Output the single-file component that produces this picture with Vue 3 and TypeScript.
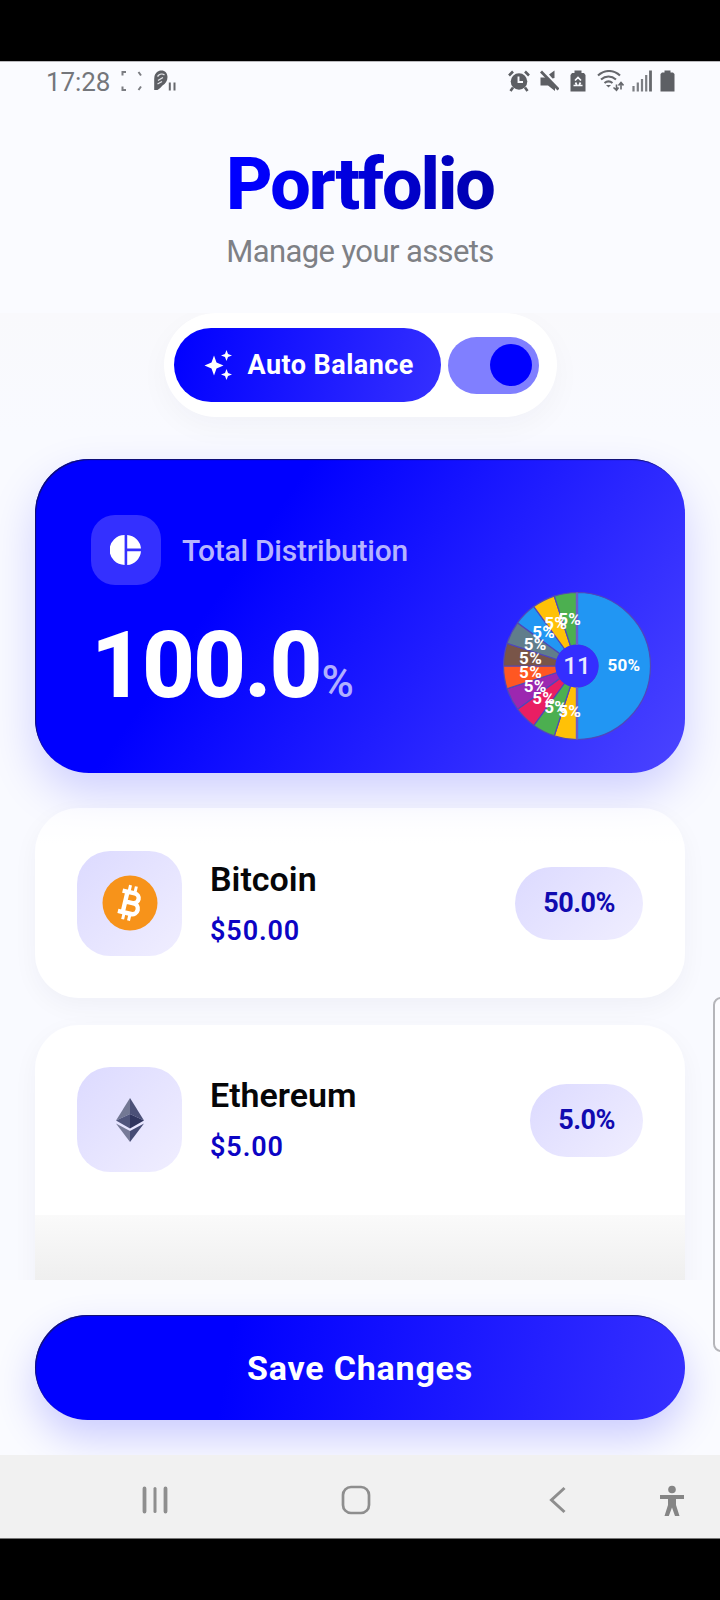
<script setup lang="ts">
interface Asset {
  id: 'btc' | 'eth'
  name: string
  value: string
  share: string
}

interface Slice {
  d: string
  color: string
  label: string
  x: number
  y: number
}

const assets: Asset[] = [
  { id: 'btc', name: 'Bitcoin', value: '$50.00', share: '50.0%' },
  { id: 'eth', name: 'Ethereum', value: '$5.00', share: '5.0%' },
]

const shares: [number, string][] = [
  [50, '#2196f3'],
  [5, '#ffc107'],
  [5, '#4caf50'],
  [5, '#e91e63'],
  [5, '#9c27b0'],
  [5, '#ff5722'],
  [5, '#795548'],
  [5, '#607d8b'],
  [5, '#2196f3'],
  [5, '#ffc107'],
  [5, '#4caf50'],
]

const OUTER = 73.5
const INNER = 21

function point(radius: number, percent: number): [number, number] {
  const angle = (percent / 100) * Math.PI * 2
  return [75 + radius * Math.sin(angle), 75 - radius * Math.cos(angle)]
}

let start = 0
const slices: Slice[] = shares.map(([size, color]) => {
  const end = start + size
  const [ax, ay] = point(OUTER, start)
  const [bx, by] = point(OUTER, end)
  const [cx, cy] = point(INNER, end)
  const [dx, dy] = point(INNER, start)
  const [x, y] = point(47, start + size / 2)
  start = end
  return {
    d: `M${ax} ${ay}A${OUTER} ${OUTER} 0 0 1 ${bx} ${by}L${cx} ${cy}A${INNER} ${INNER} 0 0 0 ${dx} ${dy}Z`,
    color,
    label: `${size}%`,
    x,
    y,
  }
})
</script>

<template>
  <div class="device">
    <div class="status">
      <div class="status-left">
        <span class="clock">17:28</span>
        <svg class="i-frame" width="22" height="20" viewBox="0 0 22 20" fill="none" stroke="#7b7d82" stroke-width="2">
          <path d="M1.500 4.500V1H5M17.500 1l2.500 3.500M20 15.500 17.500 19M5 19H1.500v-3.500" />
        </svg>
        <svg class="i-app" width="24" height="22" viewBox="0 0 24 22">
          <path fill="#5d5f64" d="M1.500 6C3 2 5.500.5 8.500.5c3.500 0 6 2.700 6 6.500 0 4-2 6.500-5 8.500-1.500 1.500-3 3.500-5 4.500H1.200V9z" />
          <path d="M4.500 6.500c2-2.500 5-3 7-1.500M5 10.500l5-3M4.500 14l4.500-2.500" stroke="#e4e5e9" stroke-width="1.300" fill="none" />
          <path d="M16.800 12.500V20.500M21.500 12.500V20.500" stroke="#66686d" stroke-width="2" />
        </svg>
      </div>
      <div class="status-right">
        <svg width="22" height="22" viewBox="0 0 22 22">
          <circle cx="11" cy="11.500" r="8.300" fill="#5d5f64" />
          <path d="M1 5.500 5 1.500M21 5.500l-4-4M5 17.500 2.500 21M17 17.500l2.500 3.500" stroke="#5d5f64" stroke-width="2.600" />
          <path d="M10.500 6.500v5.500h4.500" stroke="#fafbff" stroke-width="1.900" fill="none" />
        </svg>
        <svg class="i-mute" width="19" height="22" viewBox="0 0 19 22">
          <path fill="#5d5f64" d="M.5 7.500h6L15 15.500v5.500l-7-5.500H.5zM9 4.500 14.500.5v7.500l-2 .5z" />
          <path d="m1 1.500 17.500 18" stroke="#5d5f64" stroke-width="2.800" />
        </svg>
        <svg class="i-saver" width="16" height="22" viewBox="0 0 16 22">
          <path fill="#5d5f64" d="M4.500.5h7V3H14l1.500 2v16.500H.5V5L2 3h2.500z" />
          <path d="M5 10.500 8 7.500l3 3M3.500 15.500h3.500l-1.500-3M12.500 15.500H9l1.500-3" stroke="#fafbff" stroke-width="1.700" fill="none" />
        </svg>
        <svg class="i-wifi" width="27" height="22" viewBox="0 0 27 22" fill="none" stroke="#66686d" stroke-width="2.100">
          <path d="M1 5.500C7.500-.5 16.500-.5 23 5.500M4 9.500c4.500-4 10.500-4 15 0M7.500 13c2.600-2.200 5.400-2.200 8 0" />
          <path fill="#66686d" stroke="none" d="M11.500 17.500 9 15h5z" />
          <path d="M19.500 14.500V20M16.500 17.500l3 2.700 2-2.700M24 19.500V13M21.500 15.500l2.500-3 2.500 3" stroke-width="1.600" />
        </svg>
        <svg class="i-signal" width="20" height="22" viewBox="0 0 20 22" stroke="#66686d">
          <path d="M1.500 16v5.500M5.800 12.500v9M10 9v12.500M14.200 5v16.500" stroke="#7c7e83" stroke-width="2.200" />
          <path d="M18.500.5v21" stroke-width="2.800" />
        </svg>
        <svg class="i-battery" width="15" height="22" viewBox="0 0 15 22">
          <path fill="#5d5f64" d="M4.500.5h6V2.500H13l1.500 1.500v17.500H.5V4L2 2.500h2.500z" />
        </svg>
      </div>
    </div>

    <header class="header">
      <h1 class="title">Portfolio</h1>
      <p class="subtitle">Manage your assets</p>
    </header>

    <main class="content">
      <div class="balance">
        <button class="auto">
          <svg width="30" height="32" viewBox="0 0 30 32" fill="#fff">
            <path d="M10 6.500 12.500 13.500l7 3-7 3-2.500 7-2.500-7-7-3 7-3zM22.500 1l1.500 4 4 1.500L24 8l-1.500 4L21 8l-4-1.500L21 5zM22.500 20l1.500 4 4 1.500-4 1.500-1.500 4L21 27l-4-1.500 4-1.500z" />
          </svg>
          <span>Auto Balance</span>
        </button>
        <div class="toggle"><i class="knob"></i></div>
      </div>

      <section class="total">
        <div class="total-head">
          <div class="total-icon">
            <svg width="32" height="32" viewBox="0 0 32 32" fill="#fff">
              <path d="M14.600 1v30A15 15 0 0 1 14.600 1zM17.200 1A15 15 0 0 1 31 14.600H17.200zM17.200 17.300H31A15 15 0 0 1 17.200 31z" />
            </svg>
          </div>
          <span class="total-label">Total Distribution</span>
        </div>
        <div class="total-body">
          <div class="amount"><span class="number">100.0</span><span class="unit">%</span></div>
          <svg class="pie" width="150" height="150" viewBox="0 0 150 150">
            <path v-for="(s, i) in slices" :key="i" :d="s.d" :fill="s.color" stroke="#5048b8" stroke-width="1.200" />
            <circle cx="75" cy="75" r="21.500" fill="#342eff" />
            <path d="M75 1.500V54M75 96v52.500" stroke="#6a5cc8" stroke-width="2.400" />
            <text v-for="(s, i) in slices" :key="'t' + i" class="slice-label" :x="s.x" :y="s.y + 5" text-anchor="middle">{{ s.label }}</text>
            <text class="count" x="75" y="83" text-anchor="middle">11</text>
          </svg>
        </div>
      </section>

      <section v-for="a in assets" :key="a.id" class="asset" :class="a.id">
        <div class="coin">
          <svg v-if="a.id === 'btc'" width="56" height="56" viewBox="0 0 56 56">
            <circle cx="28" cy="28" r="27.500" fill="#f7931a" />
            <g transform="rotate(13 28 28)" fill="none" stroke="#fff">
              <path d="M23 17.500v21M18 17.500h12.500a5 5 0 0 1 0 10H23M18 38.500h13.500a5.500 5.500 0 0 0 0-11" stroke-width="4.400" />
              <path d="M24.500 10.500v7M30.500 10.500v7M24.500 38.500v7M30.500 38.500v7" stroke-width="3" />
            </g>
          </svg>
          <svg v-else width="28" height="44" viewBox="0 0 28 44">
            <path fill="#737894" d="M14 0 0 22.500 14 16z" />
            <path fill="#4b5078" d="m14 0 14 22.500L14 16z" />
            <path fill="#50557c" d="M0 22.500 14 16v14.500z" />
            <path fill="#30355f" d="M28 22.500 14 16v14.500z" />
            <path fill="#777b98" d="M0 25.500 14 33v11z" />
            <path fill="#454b75" d="M28 25.500 14 33v11z" />
          </svg>
        </div>
        <div class="info">
          <div class="name">{{ a.name }}</div>
          <div class="value">{{ a.value }}</div>
        </div>
        <div class="chip">{{ a.share }}</div>
      </section>
    </main>

    <footer class="footer">
      <button class="save">Save Changes</button>
    </footer>

    <nav class="nav">
      <svg width="28" height="28" viewBox="0 0 28 28" stroke="#8e8e8e" stroke-linecap="round">
        <path d="M3.500 2.500v23M24.500 2.500v23" stroke-width="3.800" /><path d="M14 2.500v23" stroke-width="3" />
      </svg>
      <svg class="home" width="30" height="30" viewBox="0 0 30 30" fill="none" stroke="#8e8e8e" stroke-width="2.700">
        <rect x="2" y="2" width="26" height="26" rx="8" />
      </svg>
      <svg class="back" width="18" height="28" viewBox="0 0 18 28" fill="none" stroke="#8e8e8e" stroke-width="3">
        <path d="M15.500 2 2.500 14l13 12" />
      </svg>
      <svg class="access" width="26" height="32" viewBox="0 0 26 32" fill="#858585">
        <circle cx="13" cy="4.500" r="3.800" />
        <path d="M1 10h24v4h-8V20l3.500 11h-4.500L13 22.500 9.800 31H5.500L9 20v-6H1z" />
      </svg>
    </nav>

    <div class="edge-handle"></div>
  </div>
</template>

<style>
html,
body {
  margin: 0;
  background: #000;
}
</style>

<style scoped>
.device {
  position: relative;
  box-sizing: border-box;
  display: flex;
  flex-direction: column;
  width: 720px;
  height: 1600px;
  padding: 61px 0 61px;
  overflow: hidden;
  background: #000;
  font-family: Roboto, "Liberation Sans", sans-serif;
  white-space: nowrap;
}
.status {
  display: flex;
  justify-content: space-between;
  flex: none;
  height: 48px;
  box-sizing: border-box;
  padding: 8px 45px 0 46px;
  background: #fafbff;
  border-top: 1px solid #b9b9bd;
}
.status-left,
.status-right {
  display: flex;
  height: 22px;
}
.clock {
  font-size: 26px;
  line-height: 24px;
  letter-spacing: -0.1px;
  color: #74767b;
}
.i-frame {
  margin: 1px 0 0 11px;
}
.i-app {
  margin-left: 10px;
}
.i-mute {
  margin-left: 10px;
}
.i-saver,
.i-wifi {
  margin-left: 11px;
}
.i-signal,
.i-battery {
  margin-left: 8px;
}
.header {
  flex: none;
  height: 204px;
  background: #fafbff;
  text-align: center;
}
.title {
  width: max-content;
  margin: 36px auto 0;
  font-size: 72px;
  line-height: 80px;
  font-weight: 800;
  letter-spacing: -2px;
  background: linear-gradient(100deg, #00f 10%, #0000b0 95%);
  -webkit-background-clip: text;
  background-clip: text;
  color: transparent;
}
.subtitle {
  margin: 9px 0 0;
  font-size: 31px;
  line-height: 36px;
  letter-spacing: -0.6px;
  color: #7e8085;
}
.content {
  flex: none;
  display: flex;
  flex-direction: column;
  align-items: center;
  height: 967px;
  overflow: hidden;
  background: linear-gradient(#f9f9fc, #f9faff 120px);
}
.balance {
  display: flex;
  flex: none;
  align-items: center;
  gap: 7px;
  box-sizing: border-box;
  width: 393px;
  height: 104px;
  padding: 0 10px;
  border-radius: 52px;
  background: #fff;
  box-shadow: 0 10px 30px rgba(20, 20, 60, 0.035);
}
.auto {
  display: flex;
  align-items: center;
  gap: 14px;
  width: 267px;
  height: 74px;
  padding: 0 0 0 30px;
  border: 0;
  border-radius: 37px;
  background: linear-gradient(105deg, #00f, #3530ff);
  color: #fff;
  font: 700 27px/32px Roboto, sans-serif;
  letter-spacing: 0.45px;
}
.toggle {
  display: flex;
  align-items: center;
  justify-content: flex-end;
  box-sizing: border-box;
  width: 91px;
  height: 57px;
  padding-right: 7px;
  border-radius: 29px;
  background: #807fff;
}
.knob {
  width: 42px;
  height: 42px;
  border-radius: 50%;
  background: #00f;
}
.total {
  flex: none;
  box-sizing: border-box;
  width: 650px;
  height: 314px;
  margin-top: 42px;
  padding: 56px 33px 0 56px;
  border-radius: 54px;
  background: linear-gradient(125deg, #00f 32%, #4b44ff 100%);
  box-shadow: 0 20px 46px rgba(0, 0, 255, 0.17), inset 1px 1px 1px #10106a;
}
.total-head {
  display: flex;
  align-items: center;
  gap: 21px;
  height: 70px;
}
.total-icon {
  display: grid;
  place-items: center;
  width: 70px;
  height: 70px;
  border-radius: 24px;
  background: #3430ff;
}
.total-label {
  font-size: 30px;
  font-weight: 500;
  letter-spacing: -0.25px;
  color: #b5b3ff;
}
.total-body {
  display: flex;
  justify-content: space-between;
}
.amount {
  padding: 26px 0 0 0;
  line-height: 110px;
}
.number {
  font-size: 92px;
  font-weight: 800;
  letter-spacing: -2px;
  color: #fff;
}
.unit {
  margin-left: 1px;
  font-size: 44px;
  font-weight: 500;
  color: #b1afff;
}
.pie {
  margin-top: 6px;
}
.slice-label {
  font-size: 17px;
  font-weight: 700;
  letter-spacing: 0.3px;
  fill: #fff;
}
.count {
  font-size: 24px;
  font-weight: 500;
  fill: #eae9ff;
}
.asset {
  display: flex;
  flex: none;
  align-items: center;
  box-sizing: border-box;
  width: 650px;
  height: 190px;
  margin-top: 27px;
  padding: 0 42px;
  border-radius: 44px;
  background: #fff;
  box-shadow: 0 8px 26px rgba(20, 30, 80, 0.045);
}
.btc {
  margin-top: 35px;
  background: linear-gradient(rgba(255, 255, 255, 0.6), #fff 36px);
}
.eth {
  align-items: flex-start;
  height: 340px;
  padding-top: 42px;
  background: linear-gradient(#fff 190px, #fafafa 190px, #efefef 255px);
}
.coin {
  display: grid;
  place-items: center;
  width: 105px;
  height: 105px;
  border-radius: 33px;
  background: linear-gradient(135deg, #dcdaff, #f0eeff);
}
.info {
  flex: 1;
  height: 105px;
  padding-left: 28px;
}
.name {
  margin-top: 8px;
  font-size: 34px;
  line-height: 40px;
  font-weight: 600;
  color: #060608;
}
.value {
  margin-top: 16px;
  font-size: 27px;
  line-height: 32px;
  font-weight: 600;
  letter-spacing: 0.9px;
  color: #0c04c4;
}
.chip {
  padding: 0 28px;
  border-radius: 37px;
  background: linear-gradient(135deg, #dcdaff, #f0eeff);
  font-size: 27px;
  line-height: 73px;
  font-weight: 700;
  letter-spacing: -0.5px;
  color: #100ab0;
}
.eth .chip {
  margin-top: 17px;
}
.footer {
  flex: none;
  box-sizing: border-box;
  height: 175px;
  padding: 35px;
  overflow: hidden;
  background: #fafbff;
}
.save {
  display: block;
  width: 650px;
  height: 105px;
  padding: 0;
  border: 0;
  border-radius: 53px;
  background: linear-gradient(100deg, #00f 30%, #3630ff);
  box-shadow: 0 18px 40px rgba(0, 0, 255, 0.19), inset 1px 1px 1px #15156a;
  color: #fff;
  font: 700 34px/107px Roboto, sans-serif;
  letter-spacing: 0.8px;
}
.nav {
  display: flex;
  flex: none;
  align-items: center;
  box-sizing: border-box;
  height: 84px;
  padding: 4px 0 0 141px;
  background: #f1f1f1;
  border-bottom: 1px solid #777;
}
.nav > svg {
  margin-top: 2px;
}
.home {
  margin-left: 172px;
}
.back {
  margin-left: 178px;
}
.nav > .access {
  margin: 4px 0 0 92px;
}
.edge-handle {
  position: absolute;
  top: 997px;
  left: 713px;
  box-sizing: border-box;
  width: 20px;
  height: 355px;
  border: 2px solid #b5b5ba;
  border-radius: 8px;
  background: #fcfcff;
}
</style>
